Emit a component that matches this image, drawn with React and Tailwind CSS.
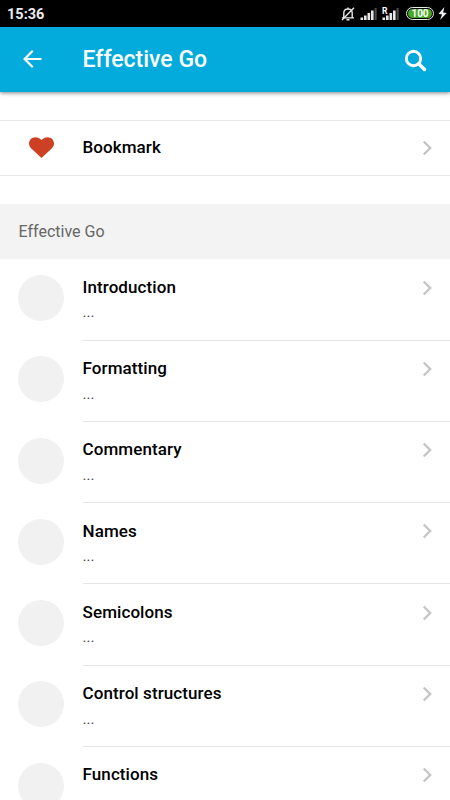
// ── Chapitres affichés dans la liste ─────────────────────
const CHAPTERS = [
  { title: 'Introduction',       summary: '...' },
  { title: 'Formatting',         summary: '...' },
  { title: 'Commentary',         summary: '...' },
  { title: 'Names',              summary: '...' },
  { title: 'Semicolons',         summary: '...' },
  { title: 'Control structures', summary: '...' },
  { title: 'Functions' },
]

function Chevron() {
  return (
    <svg width="10" height="16" viewBox="0 0 10 16" fill="none"
         stroke="#c4c4c6" strokeWidth="2.3" className="shrink-0">
      <path d="M1.7 1.5 8.2 8l-6.5 6.5" />
    </svg>
  )
}

function Signal({ roaming }) {
  return (
    <svg width="18" height="14" viewBox="0 0 18 14" className="shrink-0">
      <g fill="#e8e8e8">
        <rect x="0.5" y="10.5" width="2.6" height="2.5" />
        <rect x="4" y="8.5" width="2.6" height="4.5" />
        <rect x="7.5" y="6" width="2.6" height="7" />
        <rect x="11" y="3.5" width="2.6" height="9.5" />
      </g>
      <rect x="14.5" y="1" width="2.2" height="12" fill="#4a4a4a" />
      {roaming && (
        <text x="0" y="6.5" fill="#fff" fontSize="8.5" fontWeight="700"
              fontFamily="Roboto, sans-serif">R</text>
      )}
    </svg>
  )
}

function StatusBar() {
  return (
    <div className="flex h-[27px] shrink-0 items-center bg-black pl-[7px] pr-[3px] text-white">
      <span className="pt-[3px] text-[14.5px] font-bold leading-none text-[#ececec]">15:36</span>
      <div className="ml-auto flex items-center">
        <svg width="14" height="14" viewBox="0 0 14 14" fill="none"
             stroke="#e8e8e8" strokeWidth="1.4" className="mr-[5px]">
          <path d="M2.8 10.7V6C2.8 3.6 4.5 2 7 2s4.2 1.6 4.2 4v4.7M1 10.9h12M7 .5V2M5.5 12.8h3" />
          <path d="M13 .8 1 13" />
        </svg>
        <Signal />
        <span className="w-[4px]" />
        <Signal roaming />
        {/* ── Batterie ── */}
        <div className="ml-[6px] flex h-[13px] w-[28px] items-center justify-center rounded-full border border-[#e4eee0] bg-black p-px">
          <div className="flex h-full w-full items-center justify-center rounded-full bg-[#45a824] text-[10px] font-bold leading-none">
            100
          </div>
        </div>
        <svg width="9" height="13" viewBox="0 0 9 13" fill="#f0f0f0" className="ml-[4px]">
          <path d="M6.5 0 .5 6.8l3.5.7L2 13l6.7-7-3.6-.6z" />
        </svg>
      </div>
    </div>
  )
}

function Header() {
  return (
    <header className="z-10 flex h-[65px] shrink-0 items-center bg-[#02abdb] px-[23px] text-white shadow-[0_1px_4px_rgba(0,0,0,0.5)]">
      <svg width="19" height="18" viewBox="0 0 19 18" fill="none"
           stroke="currentColor" strokeWidth="2.2" className="-mt-px">
        <path d="M18.5 9H1.8M9.8.8 1.6 9l8.2 8.2" />
      </svg>
      <h1 className="ml-[40.5px] text-[23px] font-medium leading-none">Effective Go</h1>
      <svg width="23" height="23" viewBox="0 0 23 23" fill="none"
           stroke="currentColor" className="ml-auto mt-px">
        <circle cx="9.5" cy="9.5" r="7.2" strokeWidth="2.9" />
        <path d="m14.8 14.8 5.7 5.7" strokeWidth="3.5" strokeLinecap="round" />
      </svg>
    </header>
  )
}

function ChapterRow({ title, summary }) {
  return (
    <li className="flex h-[81.25px] shrink-0 pl-[18.4px]">
      <div className="mt-[15.7px] h-[46px] w-[46px] shrink-0 rounded-full bg-[#f1f1f1]" />
      <div className="ml-[18.2px] flex flex-1 justify-between border-b border-[#e6e6e6] pr-[18px]">
        <div>
          <p className="mt-[17.6px] text-[17px] font-medium leading-[20px] tracking-[0.08px] text-black">{title}</p>
          {summary && (
            <p className="mt-[6.4px] text-[15px] leading-[18px] text-[#444]">{summary}</p>
          )}
        </div>
        <div className="mt-[20.2px]">
          <Chevron />
        </div>
      </div>
    </li>
  )
}

export default function App() {
  return (
    <div className="flex h-screen w-full flex-col overflow-hidden bg-white font-[Roboto,sans-serif]">
      <StatusBar />
      <Header />

      {/* ── Favoris ── */}
      <div className="mt-[28px] flex h-[56px] shrink-0 items-center border-y border-[#e8e8e8] pb-px pl-[29px] pr-[18px]">
        <svg width="25" height="21" viewBox="0 0 25 21" fill="#cd4024">
          <path d="M12.5 21 2.3 11.5C.7 10 0 8.5 0 6.6 0 3 2.8.2 6.5.2c2.3 0 4.5 1 6 2.9C14 1.2 16.2.2 18.5.2 22.2.2 25 3 25 6.6c0 1.9-.7 3.4-2.3 4.9z" />
        </svg>
        <span className="mb-[2px] ml-[28.5px] text-[17px] font-medium leading-[20px] tracking-[0.08px] text-black">Bookmark</span>
        <div className="ml-auto">
          <Chevron />
        </div>
      </div>

      {/* ── Liste des chapitres ── */}
      <h2 className="mt-[28px] flex h-[55px] shrink-0 items-center bg-[#f3f3f3] pl-[18.5px] text-[16px] leading-none text-[#666]">
        Effective Go
      </h2>
      <ul className="flex flex-col pt-[0.4px]">
        {CHAPTERS.map((chapter) => (
          <ChapterRow key={chapter.title} {...chapter} />
        ))}
      </ul>
    </div>
  )
}
